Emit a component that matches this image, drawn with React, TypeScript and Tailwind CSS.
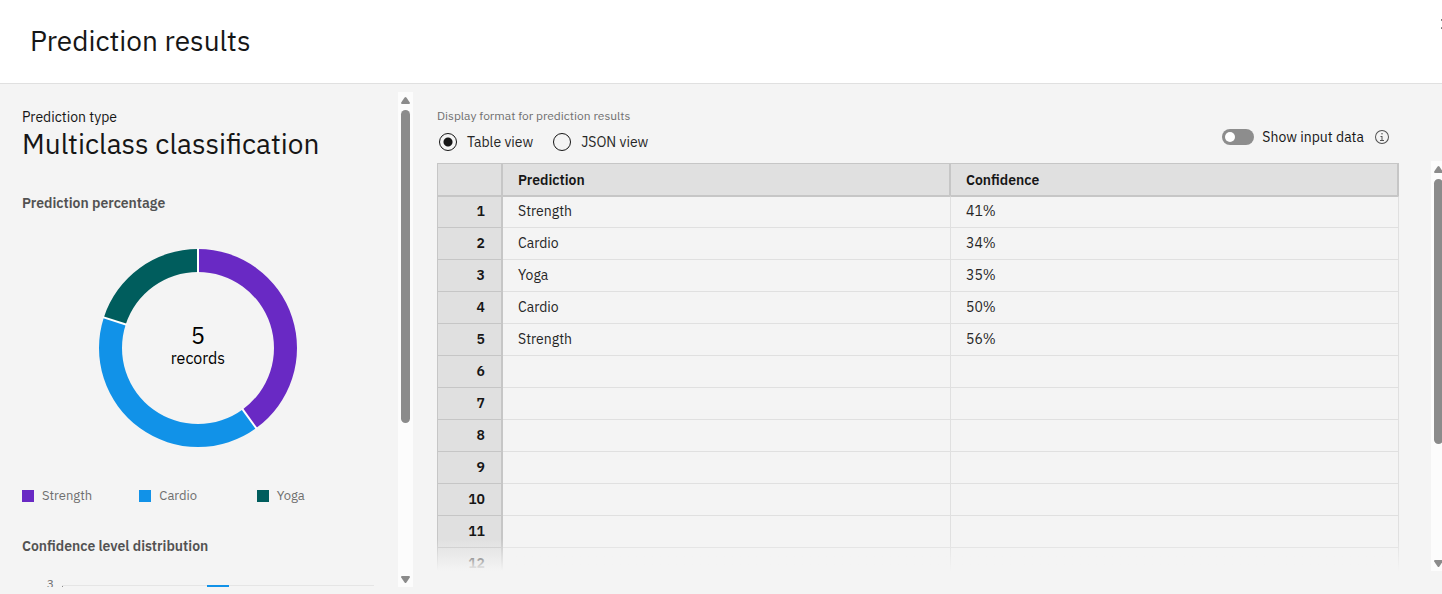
import React, { useState } from "react";

const slices = [
  { label: "Strength", share: 0.4, color: "#6929c4" },
  { label: "Cardio", share: 0.4, color: "#1192e8" },
  { label: "Yoga", share: 0.2, color: "#005d5d" },
];

const records = [
  ["Strength", "41%"],
  ["Cardio", "34%"],
  ["Yoga", "35%"],
  ["Cardio", "50%"],
  ["Strength", "56%"],
];

const rows = Array.from({ length: 12 }, (_, i) => records[i] ?? ["", ""]);

function point(radius: number, turn: number) {
  const a = turn * 2 * Math.PI;
  return `${100 + radius * Math.sin(a)} ${100 - radius * Math.cos(a)}`;
}

function Donut() {
  let start = 0;
  return (
    <svg viewBox="0 0 200 200" className="col-start-1 row-start-1 size-[200px]" aria-hidden="true">
      {slices.map((s) => {
        const from = start;
        const to = start + s.share;
        start = to;
        return (
          <path
            key={s.label}
            d={`M${point(99, from)}A99 99 0 0 1 ${point(99, to)}L${point(76, to)}A76 76 0 0 0 ${point(76, from)}Z`}
            fill={s.color}
          />
        );
      })}
      {[0, 0.4, 0.8].map((t) => (
        <path key={t} d={`M${point(75, t)}L${point(100, t)}`} stroke="#fff" strokeWidth="2" />
      ))}
    </svg>
  );
}

function ScrollBar({ thumb }: { thumb: string }) {
  return (
    <div className="flex w-[15px] shrink-0 flex-col items-center bg-[#fcfcfc] pt-1 pb-[3px]" aria-hidden="true">
      <svg viewBox="0 0 9 9" className="h-[9px] w-[9px] shrink-0" fill="#8b8b8b">
        <path d="M3.6 1.6Q4.5.4 5.4 1.6L8.8 6.6Q9.2 8 8 8H1Q-.2 8 .2 6.6Z" />
      </svg>
      <div className={`mt-[5px] w-[9px] rounded-full bg-[#8b8b8b] ${thumb}`} />
      <svg viewBox="0 0 9 9" className="mt-auto h-[9px] w-[9px] shrink-0" fill="#8b8b8b">
        <path d="M3.6 7.4Q4.5 8.6 5.4 7.4L8.8 2.4Q9.2 1 8 1H1Q-.2 1 .2 2.4Z" />
      </svg>
    </div>
  );
}

function Summary() {
  return (
    <aside className="flex w-[413px] shrink-0">
      <div className="min-w-0 flex-1 overflow-hidden pt-4 pr-6 pl-[22px]">
        <p className="text-sm/[18px]">Prediction type</p>
        <h2 className="text-[28px]/9 whitespace-nowrap">Multiclass classification</h2>
        <h3 className="mt-8 text-sm/[18px] font-semibold text-[#525252]">Prediction percentage</h3>
        <div className="mt-9 grid w-[352px] place-items-center">
          <Donut />
          <div className="col-start-1 row-start-1 pb-1.5 text-center text-black">
            <p className="text-2xl/[26px]">5</p>
            <p className="text-base/5">records</p>
          </div>
        </div>
        <ul className="mt-[39px] grid w-[352px] grid-cols-3 text-[13px]/[18px] text-[#6f6f6f]">
          {slices.map((s) => (
            <li key={s.label} className="flex items-center gap-2">
              <span className="size-3" style={{ backgroundColor: s.color }} />
              {s.label}
            </li>
          ))}
        </ul>
        <h3 className="mt-8 text-sm/[18px] font-semibold text-[#525252]">Confidence level distribution</h3>
        <svg viewBox="0 0 352 140" className="mt-5 h-[140px] w-[352px]">
          <text x="32" y="13" textAnchor="end" fontSize="12" fill="#6f6f6f">3</text>
          <path d="M40 10.5H352" stroke="#e5e5e5" />
          <path d="M40.5 11V140" stroke="#8d8d8d" />
          <rect x="185" y="10" width="22" height="130" fill="#1192e8" />
        </svg>
      </div>
      <ScrollBar thumb="h-[313px]" />
    </aside>
  );
}

const radio =
  "size-[18px] appearance-none rounded-full border border-[#161616] checked:bg-[radial-gradient(circle,#161616_4px,transparent_5px)]";

function Results() {
  const [view, setView] = useState("table");
  const [showInput, setShowInput] = useState(false);
  return (
    <main className="flex min-w-0 flex-1 flex-col pb-4 pl-6">
      <div className="flex items-end justify-between pt-4 pr-[52px] pb-[9px]">
        <fieldset>
          <legend className="text-xs/4 text-[#6f6f6f]">Display format for prediction results</legend>
          <div className="mt-2 flex gap-5 pl-0.5 text-sm/5 text-[#262626]">
            <label className="flex items-center gap-2.5">
              <input type="radio" name="view" className={radio} checked={view === "table"} onChange={() => setView("table")} />
              Table view
            </label>
            <label className="flex items-center gap-2.5">
              <input type="radio" name="view" className={radio} checked={view === "json"} onChange={() => setView("json")} />
              JSON view
            </label>
          </div>
        </fieldset>
        <div className="flex items-center gap-2.5 pb-[5px]">
          <label className="flex items-center gap-2 text-sm/5">
            <input
              type="checkbox"
              role="switch"
              checked={showInput}
              onChange={(e) => setShowInput(e.target.checked)}
              className="flex h-4 w-8 appearance-none items-center rounded-full bg-[#8d8d8d] px-[3px] before:size-2.5 before:rounded-full before:bg-white checked:justify-end checked:bg-[#198038]"
            />
            Show input data
          </label>
          <button type="button" aria-label="About input data">
            <svg viewBox="0 0 32 32" className="size-4" fill="#525252">
              <path d="M17 22V14H13v2h2v6H12v2h8V22zM16 8a1.5 1.5 0 1 0 1.5 1.5A1.5 1.5 0 0 0 16 8z" />
              <path d="M16,30A14,14,0,1,1,30,16,14,14,0,0,1,16,30ZM16,4A12,12,0,1,0,28,16,12,12,0,0,0,16,4Z" />
            </svg>
          </button>
        </div>
      </div>
      <div className="flex min-h-0 flex-1">
        <div className="relative min-w-0 flex-1 overflow-hidden pt-0.5">
          <table className="w-full table-fixed border-separate border-spacing-0 text-left text-sm/5">
            <thead>
              <tr className="h-[33px] bg-[#e0e0e0]">
                <th className="w-[66px] border-t border-r-2 border-b border-l border-[#c6c6c6] p-0" />
                <th className="border-t border-r-2 border-b border-[#c6c6c6] px-[15px] py-0 font-semibold">Prediction</th>
                <th className="border-t border-r-2 border-b border-[#c6c6c6] px-[15px] py-0 font-semibold">Confidence</th>
              </tr>
            </thead>
            <tbody className="text-[#262626] [&>tr:first-child>*]:border-t [&>tr:first-child>*]:border-t-[#c6c6c6]">
              {rows.map(([prediction, confidence], i) => (
                <tr key={i} className="h-8">
                  <th className="border-r-2 border-b border-l border-[#c6c6c6] bg-[#e0e0e0] pt-0 pr-4 pb-0.5 text-right font-semibold text-[#161616]">
                    {i + 1}
                  </th>
                  <td className="border-r border-b border-[#e0e0e0] px-[15px] pt-0 pb-0.5">{prediction}</td>
                  <td className="border-r border-b border-[#e0e0e0] px-[15px] pt-0 pb-0.5">{confidence}</td>
                </tr>
              ))}
            </tbody>
          </table>
          <div className="pointer-events-none absolute inset-x-0 bottom-0 h-8 bg-linear-to-b from-[#f4f4f4]/0 to-[#f4f4f4]" />
        </div>
        <div className="ml-8 flex w-[11px] shrink-0 overflow-hidden">
          <ScrollBar thumb="h-[265px]" />
        </div>
      </div>
    </main>
  );
}

export default function App() {
  return (
    <div className="flex h-screen flex-col overflow-hidden bg-[#f4f4f4] font-['IBM_Plex_Sans','Roboto',sans-serif] text-[#161616]">
      <header className="flex h-[84px] shrink-0 items-start justify-between overflow-hidden border-b border-[#e0e0e0] bg-white">
        <h1 className="pt-[23px] pl-[30px] text-[28px]/9">Prediction results</h1>
        <button type="button" aria-label="Close" className="mt-3.5 -mr-3.5 shrink-0">
          <svg viewBox="0 0 32 32" className="size-5" fill="#161616">
            <path d="M17.4141 16L24 9.4141 22.5859 8 16 14.5859 9.4143 8 8 9.4141 14.5859 16 8 22.5859 9.4143 24 16 17.4141 22.5859 24 24 22.5859z" />
          </svg>
        </button>
      </header>
      <div className="flex min-h-0 flex-1 pt-2 pb-[7px]">
        <Summary />
        <Results />
      </div>
    </div>
  );
}
